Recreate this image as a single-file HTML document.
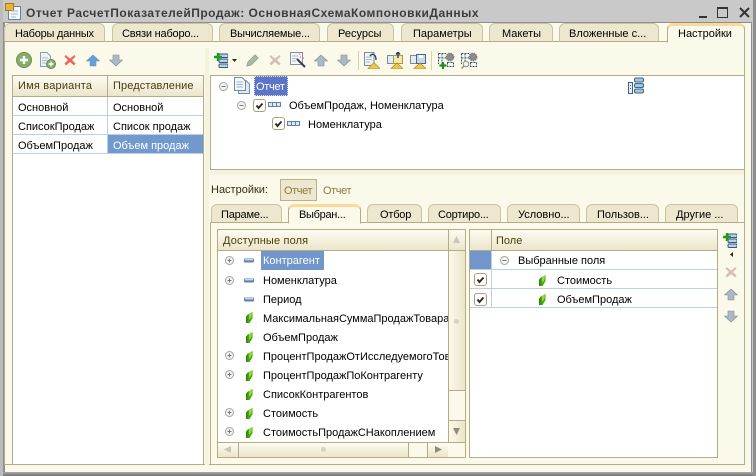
<!DOCTYPE html>
<html lang="ru"><head><meta charset="utf-8"><title>Отчет</title>
<style>
html,body{margin:0;padding:0;width:756px;height:476px;overflow:hidden;background:#c9c9c9}
*{box-sizing:border-box}
div,svg{position:absolute}
.t{position:absolute;white-space:nowrap;font:11px/14px "Liberation Sans",sans-serif;color:#000;margin-top:1px}
.h{color:#4a3c0c}
.tab{height:19px;background:#ece7ce;border:1px solid #c9c3a0;border-bottom:1px solid #b3ac86;border-radius:6px 6px 0 0}
.tab.a{background:#fbf9ea;border-color:#b3ac86;border-top:3px solid #fbd99a;border-bottom:1px solid #fbf9ea;height:20px}
.b{border:1px solid #b3ac86;background:#fff}
.hd{background:linear-gradient(#fdfcf2,#ebe5ca);border-bottom:1px solid #b3ac86}
.l{background:#b3ac86}
.r{background:#b9cfe6}
</style></head><body>
<svg width="0" height="0" style="position:absolute">
<defs>
<symbol id="leaf" viewBox="0 0 7 11"><path d="M1 3 L6.500 0 L6.500 6 L3.500 11 L0 11 Z" fill="#46a30e"/><path d="M3 2 L6 .5 L5.500 5 L3 8 Z" fill="#8fdc3c"/><path d="M0 4.500 L1.500 3.500 L1.500 11 L0 11 Z" fill="#2f8409"/></symbol>
<symbol id="dash" viewBox="0 0 10 5"><rect x="0" y="0.5" width="10" height="4" rx="1" fill="#5f84a8"/><rect x="1" y="1" width="8" height="1.4" fill="#c6dbec"/></symbol>
<symbol id="plus" viewBox="0 0 9 9"><circle cx="4.5" cy="4.5" r="4" fill="#f4f4f0" stroke="#a3a3a3"/><path d="M2.5 4.5H6.5M4.5 2.5V6.5" stroke="#777"/></symbol>
<symbol id="minus" viewBox="0 0 9 9"><circle cx="4.5" cy="4.5" r="4" fill="#f4f4f0" stroke="#a3a3a3"/><path d="M2.5 4.5H6.5" stroke="#777"/></symbol>
<symbol id="chk" viewBox="0 0 13 13"><rect x=".5" y=".5" width="12" height="12" rx="2.500" fill="#fff" stroke="#ac9f76"/><path d="M3.500 6.500 L5.500 9 L9.500 4.500" fill="none" stroke="#2a2a2a" stroke-width="1.900"/></symbol>
<symbol id="tri" viewBox="0 0 13 5"><rect x=".5" y=".5" width="12" height="4" fill="#dbe8f3" stroke="#5f80a8"/><path d="M4.500 0V5M8.500 0V5" stroke="#5f80a8"/></symbol>
<symbol id="x" viewBox="0 0 12 12"><path d="M1.5 1 L6 4.500 L10.500 1 L11.500 2.500 L8 6 L11.500 9.500 L10 11.500 L6 8 L2 11.500 L.5 9.500 L4 6 L.5 2.500 Z" fill="currentColor"/></symbol>
<symbol id="up" viewBox="0 0 14 13"><path d="M7 1 L13.500 7 L10 7 L10 12 L4 12 L4 7 L.5 7 Z" fill="currentColor" stroke="#7d8c9c" stroke-width=".6"/></symbol>
<symbol id="dn" viewBox="0 0 14 13"><path d="M7 12 L13.500 6 L10 6 L10 1 L4 1 L4 6 L.5 6 Z" fill="currentColor" stroke="#7d8c9c" stroke-width=".6"/></symbol>
<symbol id="add" viewBox="0 0 14 15"><rect x="5" y="1" width="9" height="3.500" rx="1" fill="#bcd2e4" stroke="#33587e"/><rect x="5" y="6" width="9" height="3.500" rx="1" fill="#bcd2e4" stroke="#33587e"/><rect x="5" y="11" width="9" height="3.500" rx="1" fill="#bcd2e4" stroke="#33587e"/><path d="M4 0V8M0 4H8" stroke="#1f9a1f" stroke-width="2.400"/></symbol>
<symbol id="doc" viewBox="0 0 16 17"><path d="M4.500 3.500H12L15.500 7V16.500H4.500Z" fill="#dfe9f3" stroke="#6d8aa8"/><path d="M.5 .5H8L11.500 4V13.500H.5Z" fill="#f4f8fc" stroke="#6d8aa8"/><path d="M2.500 5H9M2.500 7.500H9M2.500 10H9" stroke="#9db5cc"/></symbol>
<symbol id="ypage" viewBox="0 0 16 17"><path d="M.5 .5H10V13.500H.5Z" fill="#f2f5f8" stroke="#7a8b9c"/><path d="M2 5H8M2 7.500H8M2 10H6" stroke="#a5b5c4"/><path d="M6 4 C8 1 12 2 12 8" fill="none" stroke="#24476b" stroke-width="1.400"/><path d="M4 16.500H16L10 10.500Z" fill="#f4c63c" stroke="#a07c20" stroke-width=".6"/></symbol>
<symbol id="yfold" viewBox="0 0 16 17"><rect x=".5" y="3.500" width="6" height="8" fill="#e2ecf5" stroke="#7a8b9c"/><rect x="6.500" y="3.500" width="9" height="8" fill="#fbe7a2" stroke="#a89a5c"/><path d="M11 0V6M9 2.500L11 0L13 2.500" fill="none" stroke="#1f3e60" stroke-width="1.400"/><path d="M4 16.500H16L10 11Z" fill="#f4c63c" stroke="#a07c20" stroke-width=".6"/></symbol>
<symbol id="ysave" viewBox="0 0 16 17"><rect x=".5" y="3.500" width="6" height="8" fill="#e2ecf5" stroke="#7a8b9c"/><rect x="6.500" y="2.500" width="9" height="9" fill="#c3d8ea" stroke="#47688a"/><rect x="9" y="3" width="4" height="3" fill="#fff"/><path d="M4 16.500H16L10 11Z" fill="#f4c63c" stroke="#a07c20" stroke-width=".6"/></symbol>
<symbol id="grid" viewBox="0 0 17 17"><path d="M.5 1.500H8M.5 6H8M.5 1.500V12M4 1.500V12M9.500 10.500H15.500V14.500H9.500Z" fill="none" stroke="#2f5379" stroke-dasharray="2 1"/><circle cx="12" cy="5" r="3.500" fill="#8c8c8c" stroke="#7b7b7b" stroke-width="1.800" stroke-dasharray="1.500 .6"/></symbol>
</defs></svg>

<!-- window -->
<div style="left:0;top:0;width:756px;height:476px;background:#c9c9c9"></div>
<div style="left:0;top:472px;width:756px;height:4px;background:linear-gradient(#aaa,#747474)"></div>
<div style="left:753px;top:0;width:3px;height:476px;background:#8f8f8f"></div>
<div style="left:0;top:0;width:3px;height:476px;background:#bcbcbc"></div>
<div style="left:3px;top:22px;width:749px;height:450px;background:#fbf9ea;border:1px solid #8e8e8e;border-width:1px 1px 0 2px"></div>

<!-- title -->
<svg style="left:5px;top:3px" width="17" height="18" viewBox="0 0 17 18"><rect x="3.500" y="3.500" width="12" height="13" fill="#f6f8fa" stroke="#6b7f96"/><rect x=".5" y=".5" width="8" height="7" fill="#e7b53a" stroke="#a17b1d"/><path d="M6 8H13M6 11H13M6 14H11" stroke="#a8b9cb"/></svg>
<div class="t" style="left:26px;top:5px;font-weight:bold;font-size:12px;letter-spacing:.51px;color:#3c3c3c">Отчет РасчетПоказателейПродаж: ОсновнаяСхемаКомпоновкиДанных</div>
<div style="left:699px;top:16px;width:8px;height:2px;background:#333"></div>
<div style="left:717px;top:7px;width:11px;height:11px;border:1px solid #333;border-top-width:2px"></div>
<svg style="left:739px;top:7px" width="11" height="11"><path d="M1 1L10 10M10 1L1 10" stroke="#333" stroke-width="2"/></svg>

<!-- top tabs -->
<div style="left:4px;top:41px;width:740px;height:1px;background:#b3ac86"></div>
<div class="tab" style="left:4px;top:23px;width:101px"></div><div class="t" style="left:15px;top:26px;letter-spacing:-.22px">Наборы данных</div>
<div class="tab" style="left:112px;top:23px;width:101px"></div><div class="t" style="left:122px;top:26px;letter-spacing:-.2px">Связи наборо...</div>
<div class="tab" style="left:219px;top:23px;width:101px"></div><div class="t" style="left:230px;top:26px;letter-spacing:-.15px">Вычисляемые...</div>
<div class="tab" style="left:327px;top:23px;width:67px"></div><div class="t" style="left:338px;top:26px">Ресурсы</div>
<div class="tab" style="left:401px;top:23px;width:82px"></div><div class="t" style="left:413px;top:26px">Параметры</div>
<div class="tab" style="left:489px;top:23px;width:64px"></div><div class="t" style="left:502px;top:26px">Макеты</div>
<div class="tab" style="left:559px;top:23px;width:100px"></div><div class="t" style="left:569px;top:26px">Вложенные с...</div>
<div class="tab a" style="left:667px;top:23px;width:78px"></div><div class="t" style="left:678px;top:26px">Настройки</div>
<div style="left:744px;top:41px;width:1px;height:424px;background:#b3ac86"></div>
<div style="left:4px;top:41px;width:1px;height:424px;background:#b3ac86"></div>
<div style="left:4px;top:464px;width:741px;height:1px;background:#b3ac86"></div>

<!-- left toolbar -->
<svg style="left:16px;top:52px" width="16" height="16" viewBox="0 0 16 16"><circle cx="8" cy="8" r="7.500" fill="#86ad66" stroke="#6f8c5b"/><path d="M8 4V12M4 8H12" stroke="#fff" stroke-width="2.400"/></svg>
<svg style="left:40px;top:52px" width="16" height="17" viewBox="0 0 16 17"><path d="M.5 .5H7L10.500 4V14.500H.5Z" fill="#eef3f8" stroke="#8ba0b5"/><path d="M2 6H8M2 8.500H7M2 11H6" stroke="#a8b9ca"/><circle cx="11" cy="12" r="4.500" fill="#82ab68" stroke="#688b54"/><path d="M11 9.500V14.500M8.500 12H13.500" stroke="#fff" stroke-width="1.400"/></svg>
<svg style="left:64px;top:54px;color:#e8665a" width="12" height="12"><use href="#x"/></svg>
<svg style="left:86px;top:54px;color:#5ea4dc" width="14" height="13"><use href="#up"/></svg>
<svg style="left:109px;top:54px;color:#abb9c5" width="14" height="13"><use href="#dn"/></svg>

<!-- left table -->
<div class="b" style="left:12px;top:75px;width:192px;height:390px"></div>
<div class="hd" style="left:13px;top:76px;width:190px;height:21px"></div>
<div class="l" style="left:107px;top:76px;width:1px;height:21px"></div>
<div class="t h" style="left:18px;top:78px;letter-spacing:.2px">Имя варианта</div>
<div class="t h" style="left:113px;top:78px;letter-spacing:.1px">Представление</div>
<div style="left:108px;top:135px;width:95px;height:18px;background:#7199cd"></div>
<div class="r" style="left:13px;top:115px;width:190px;height:1px"></div>
<div class="r" style="left:13px;top:134px;width:190px;height:1px"></div>
<div class="r" style="left:13px;top:153px;width:190px;height:1px"></div>
<div class="r" style="left:107px;top:97px;width:1px;height:57px"></div>
<div class="t" style="left:18px;top:100px">Основной</div><div class="t" style="left:113px;top:100px">Основной</div>
<div class="t" style="left:18px;top:119px">СписокПродаж</div><div class="t" style="left:113px;top:119px">Список продаж</div>
<div class="t" style="left:18px;top:138px">ОбъемПродаж</div><div class="t" style="left:113px;top:138px;color:#fff">Объем продаж</div>

<!-- splitter -->
<div style="left:205px;top:48px;width:4px;height:417px;background:#f5f2dd"></div>

<!-- right toolbar -->
<svg style="left:214px;top:53px" width="14" height="15"><use href="#add"/></svg>
<svg style="left:232px;top:59px" width="5" height="3"><path d="M0 0H5L2.500 3Z" fill="#2f2a10"/></svg>
<svg style="left:246px;top:54px" width="13" height="13" viewBox="0 0 13 13"><path d="M9 1L12 4L5 11L1 12L2 8Z" fill="#a9bda5" stroke="#95a892"/></svg>
<svg style="left:269px;top:54px;color:#d3bfb4" width="12" height="12"><use href="#x"/></svg>
<svg style="left:290px;top:52px" width="16" height="16" viewBox="0 0 16 16"><rect x=".5" y=".5" width="12" height="12" fill="#f4f7fa" stroke="#7f94aa"/><path d="M2 4H8M2 6.500H7M2 9H6" stroke="#a8b9ca"/><path d="M7 7L15 15" stroke="#3c3c50" stroke-width="2"/><path d="M9 2h1M12 3h1M10 5h1M13 6h1" stroke="#e05050"/></svg>
<svg style="left:314px;top:54px;color:#abb9c5" width="14" height="13"><use href="#up"/></svg>
<svg style="left:337px;top:54px;color:#abb9c5" width="14" height="13"><use href="#dn"/></svg>
<div style="left:358px;top:51px;width:1px;height:19px;background:#d5d0b0"></div>
<svg style="left:364px;top:52px" width="16" height="17"><use href="#ypage"/></svg>
<svg style="left:387px;top:52px" width="16" height="17"><use href="#yfold"/></svg>
<svg style="left:410px;top:52px" width="16" height="17"><use href="#ysave"/></svg>
<div style="left:431px;top:51px;width:1px;height:19px;background:#d5d0b0"></div>
<svg style="left:438px;top:52px" width="17" height="17"><use href="#grid"/><path d="M5 10V17M1.500 13.500H8.500" stroke="#1f8a1f" stroke-width="2.200"/></svg>
<svg style="left:461px;top:52px" width="17" height="17"><use href="#grid"/><circle cx="5" cy="12" r="2.800" fill="#f0f3f6" stroke="#9a8f7a"/><path d="M3 14L.5 16.500" stroke="#b08a60" stroke-width="1.500"/></svg>

<!-- top tree -->
<div class="b" style="left:210px;top:75px;width:535px;height:95px"></div>
<svg style="left:219px;top:82px" width="9" height="9"><use href="#minus"/></svg>
<svg style="left:234px;top:77px" width="16" height="17"><use href="#doc"/></svg>
<div style="left:254px;top:76px;width:34px;height:20px;background:#5b74c8;border:1px dotted #dfe5f5"></div>
<div class="t" style="left:256px;top:79px;color:#fff;letter-spacing:-.3px">Отчет</div>
<svg style="left:237px;top:101px" width="9" height="9"><use href="#minus"/></svg>
<svg style="left:253px;top:99px" width="13" height="13"><use href="#chk"/></svg>
<svg style="left:268px;top:102px" width="13" height="5"><use href="#tri"/></svg>
<div class="t" style="left:289px;top:98px">ОбъемПродаж, Номенклатура</div>
<svg style="left:272px;top:117px" width="13" height="13"><use href="#chk"/></svg>
<svg style="left:287px;top:121px" width="13" height="5"><use href="#tri"/></svg>
<div class="t" style="left:308px;top:117px">Номенклатура</div>
<svg style="left:628px;top:77px" width="16" height="17" viewBox="0 0 16 17"><rect x="6.500" y="1" width="9" height="4" rx="1.500" fill="#a9c6de" stroke="#3d6288"/><rect x="6.500" y="6.500" width="9" height="4" rx="1.500" fill="#a9c6de" stroke="#3d6288"/><rect x="6.500" y="12" width="9" height="4" rx="1.500" fill="#a9c6de" stroke="#3d6288"/><rect x=".5" y="5.500" width="4" height="11" fill="#e4eef6" stroke="#3d6288"/><path d="M2.500 8v1M2.500 11v1" stroke="#3d6288"/></svg>

<!-- settings row -->
<div style="left:210px;top:170px;width:534px;height:5px;background:#f5f2dd"></div>
<div class="t h" style="left:211px;top:182px;color:#332c10">Настройки:</div>
<div style="left:280px;top:179px;width:37px;height:22px;background:#ece7ce;border:1px solid #b9b28c"></div>
<div class="t" style="left:284px;top:183px;color:#8a7c3c;letter-spacing:-.4px">Отчет</div>
<div class="t" style="left:323px;top:183px;color:#8a7c3c;letter-spacing:-.4px">Отчет</div>

<!-- inner tabs -->
<div style="left:210px;top:222px;width:535px;height:243px;border:1px solid #b3ac86;background:#fbf9ea"></div>
<div class="tab" style="left:211px;top:204px;width:71px"></div><div class="t" style="left:221px;top:207px;letter-spacing:-.2px">Параме...</div>
<div class="tab a" style="left:288px;top:204px;width:73px"></div><div class="t" style="left:299px;top:207px;letter-spacing:-.3px">Выбран...</div>
<div class="tab" style="left:367px;top:204px;width:55px"></div><div class="t" style="left:380px;top:207px;letter-spacing:-.2px">Отбор</div>
<div class="tab" style="left:428px;top:204px;width:73px"></div><div class="t" style="left:438px;top:207px;letter-spacing:-.2px">Сортиро...</div>
<div class="tab" style="left:507px;top:204px;width:73px"></div><div class="t" style="left:518px;top:207px">Условно...</div>
<div class="tab" style="left:586px;top:204px;width:73px"></div><div class="t" style="left:597px;top:207px">Пользов...</div>
<div class="tab" style="left:665px;top:204px;width:73px"></div><div class="t" style="left:676px;top:207px">Другие ...</div>

<!-- available fields -->
<div class="b" style="left:217px;top:229px;width:249px;height:229px"></div>
<div class="hd" style="left:218px;top:230px;width:247px;height:21px"></div>
<div class="t h" style="left:223px;top:233px;letter-spacing:.15px">Доступные поля</div>
<div style="left:448px;top:230px;width:1px;height:227px;background:#b3ac86"></div>
<svg style="left:453px;top:236px" width="7" height="7"><path d="M3.500 0L7 7H0Z" fill="#c9c6b4"/></svg>
<div style="left:449px;top:251px;width:16px;height:140px;background:linear-gradient(90deg,#fbf9ea,#ebe5ca);border-bottom:1px solid #b3ac86"></div>
<div style="left:449px;top:391px;width:16px;height:29px;background:#fbf9ea"></div>
<div style="left:449px;top:420px;width:16px;height:22px;background:linear-gradient(90deg,#fbf9ea,#ebe5ca);border-top:1px solid #b3ac86"></div>
<svg style="left:453px;top:428px" width="7" height="7"><path d="M3.500 7L7 0H0Z" fill="#8f8c7a"/></svg>
<div style="left:454px;top:319px;width:5px;height:5px;border-radius:3px;background:#d5d2c0"></div>
<div style="left:218px;top:442px;width:230px;height:15px;background:linear-gradient(#fdfcf2,#ebe5ca);border-top:1px solid #b3ac86"></div>
<div style="left:448px;top:442px;width:17px;height:15px;background:#fbf9ea;border-top:1px solid #b3ac86"></div>
<div class="l" style="left:238px;top:442px;width:1px;height:15px"></div>
<div style="left:408px;top:443px;width:19px;height:14px;background:#fbf9ea;border-left:1px solid #b3ac86"></div>
<div class="l" style="left:427px;top:442px;width:1px;height:15px"></div>
<svg style="left:224px;top:446px" width="7" height="7"><path d="M0 3.500L7 0V7Z" fill="#c9c6b4"/></svg>
<svg style="left:435px;top:446px" width="7" height="7"><path d="M7 3.500L0 0V7Z" fill="#8f8c7a"/></svg>
<div style="left:321px;top:447px;width:5px;height:5px;border-radius:3px;background:#d5d2c0"></div>

<div style="left:261px;top:251px;width:63px;height:19px;background:#7096cc"></div>
<svg style="left:225px;top:256px" width="9" height="9"><use href="#plus"/></svg>
<svg style="left:244px;top:258px" width="10" height="5"><use href="#dash"/></svg>
<div class="t" style="left:263px;top:253px;color:#fff">Контрагент</div>
<svg style="left:225px;top:276px" width="9" height="9"><use href="#plus"/></svg>
<svg style="left:244px;top:278px" width="10" height="5"><use href="#dash"/></svg>
<div class="t" style="left:263px;top:273px">Номенклатура</div>
<svg style="left:244px;top:297px" width="10" height="5"><use href="#dash"/></svg>
<div class="t" style="left:263px;top:292px">Период</div>
<svg style="left:246px;top:312px" width="7" height="11"><use href="#leaf"/></svg>
<div class="t" style="left:263px;top:311px;width:185px;overflow:hidden">МаксимальнаяСуммаПродажТовара</div>
<svg style="left:246px;top:332px" width="7" height="11"><use href="#leaf"/></svg>
<div class="t" style="left:263px;top:330px">ОбъемПродаж</div>
<svg style="left:225px;top:351px" width="9" height="9"><use href="#plus"/></svg>
<svg style="left:246px;top:351px" width="7" height="11"><use href="#leaf"/></svg>
<div class="t" style="left:263px;top:349px;width:185px;overflow:hidden">ПроцентПродажОтИсследуемогоТовара</div>
<svg style="left:225px;top:370px" width="9" height="9"><use href="#plus"/></svg>
<svg style="left:246px;top:370px" width="7" height="11"><use href="#leaf"/></svg>
<div class="t" style="left:263px;top:368px">ПроцентПродажПоКонтрагенту</div>
<svg style="left:246px;top:389px" width="7" height="11"><use href="#leaf"/></svg>
<div class="t" style="left:263px;top:387px">СписокКонтрагентов</div>
<svg style="left:225px;top:408px" width="9" height="9"><use href="#plus"/></svg>
<svg style="left:246px;top:408px" width="7" height="11"><use href="#leaf"/></svg>
<div class="t" style="left:263px;top:406px">Стоимость</div>
<svg style="left:225px;top:427px" width="9" height="9"><use href="#plus"/></svg>
<svg style="left:246px;top:427px" width="7" height="11"><use href="#leaf"/></svg>
<div class="t" style="left:263px;top:425px">СтоимостьПродажСНакоплением</div>

<!-- selected fields -->
<div class="b" style="left:469px;top:229px;width:249px;height:229px"></div>
<div class="hd" style="left:470px;top:230px;width:247px;height:21px"></div>
<div class="l" style="left:491px;top:230px;width:1px;height:21px"></div>
<div class="t h" style="left:496px;top:233px">Поле</div>
<div style="left:470px;top:251px;width:21px;height:18px;background:#7096cc"></div>
<div class="r" style="left:470px;top:269px;width:247px;height:1px"></div>
<div class="r" style="left:470px;top:288px;width:247px;height:1px"></div>
<div class="r" style="left:470px;top:307px;width:247px;height:1px"></div>
<div class="r" style="left:491px;top:251px;width:1px;height:57px"></div>
<svg style="left:500px;top:256px" width="9" height="9"><use href="#minus"/></svg>
<div class="t" style="left:518px;top:253px">Выбранные поля</div>
<svg style="left:474px;top:273px" width="13" height="13"><use href="#chk"/></svg>
<svg style="left:539px;top:275px" width="7" height="11"><use href="#leaf"/></svg>
<div class="t" style="left:557px;top:273px">Стоимость</div>
<svg style="left:474px;top:293px" width="13" height="13"><use href="#chk"/></svg>
<svg style="left:539px;top:294px" width="7" height="11"><use href="#leaf"/></svg>
<div class="t" style="left:557px;top:292px">ОбъемПродаж</div>

<!-- side toolbar -->
<svg style="left:723px;top:233px" width="14" height="15"><use href="#add"/></svg>
<svg style="left:730px;top:252px" width="3" height="5"><path d="M3 0V5L0 2.500Z" fill="#2f2a10"/></svg>
<svg style="left:725px;top:266px;color:#d3bfb4" width="12" height="12"><use href="#x"/></svg>
<svg style="left:724px;top:288px;color:#abb9c5" width="14" height="13"><use href="#up"/></svg>
<svg style="left:724px;top:310px;color:#abb9c5" width="14" height="13"><use href="#dn"/></svg>
</body></html>
